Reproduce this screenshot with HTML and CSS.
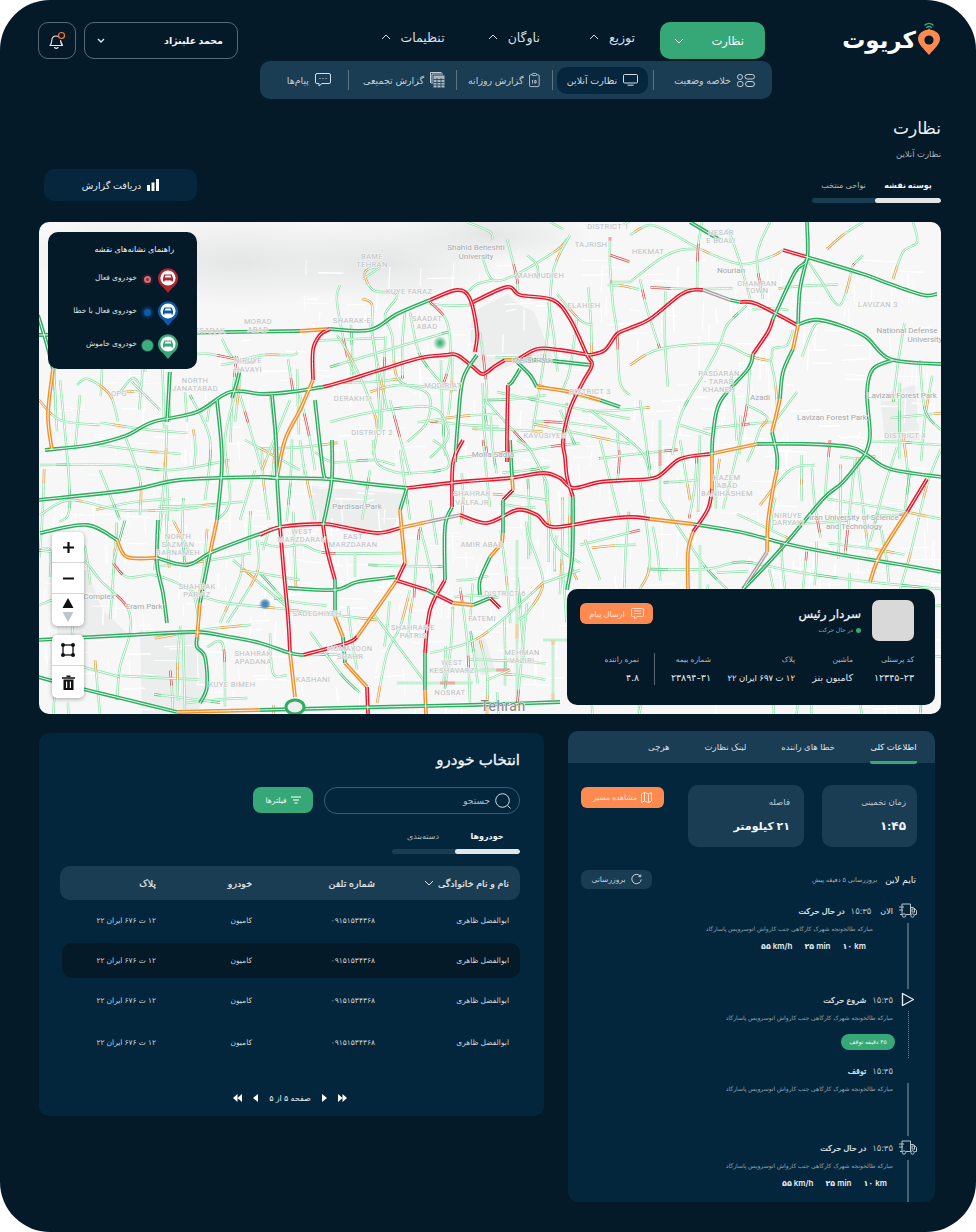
FILE: index.html
```html
<!DOCTYPE html>
<html lang="fa" dir="rtl">
<head>
<meta charset="utf-8">
<title>کریوت - نظارت</title>
<link rel="stylesheet" href="styles.css">
</head>
<body>
<div class="frame">
  <header class="topbar">
    <div class="logo">
      <svg class="logo-pin" width="24" height="36" viewBox="0 0 24 36">
        <path d="M8 5a6 6 0 0 1 8 0M9.7 7.5a3.5 3.5 0 0 1 4.6 0" fill="none" stroke="#36a877" stroke-width="1.4" stroke-linecap="round"/>
        <circle cx="12" cy="9.6" r="1" fill="#36a877"/>
        <path d="M12 35C7 29 1 24 1 19a11 9.500 0 0 1 22 0c0 5-6 10-11 16z" fill="#ff8a50"/>
        <circle cx="12" cy="20" r="4.600" fill="#051a28"/>
      </svg>
      <span class="logo-text">کریوت</span>
    </div>
    <nav class="nav">
      <a class="nav-active"><span>نظارت</span>
        <svg width="10" height="6" viewBox="0 0 10 6"><path d="M1 1l4 4 4-4" fill="none" stroke="#fff" stroke-width="1"/></svg></a>
      <a class="nav-item nav-a"><span>توزیع</span><svg width="10" height="6" viewBox="0 0 10 6"><path d="M1 5l4-4 4 4" fill="none" stroke="#d8dfe3" stroke-width="1"/></svg></a>
      <a class="nav-item nav-b"><span>ناوگان</span><svg width="10" height="6" viewBox="0 0 10 6"><path d="M1 5l4-4 4 4" fill="none" stroke="#d8dfe3" stroke-width="1"/></svg></a>
      <a class="nav-item nav-c"><span>تنظیمات</span><svg width="10" height="6" viewBox="0 0 10 6"><path d="M1 5l4-4 4 4" fill="none" stroke="#d8dfe3" stroke-width="1"/></svg></a>
    </nav>
    <div class="actions">
      <div class="user"><b>محمد علینژاد</b>
        <svg width="8" height="5" viewBox="0 0 8 5"><path d="M1 1l3 3 3-3" fill="none" stroke="#e8edf0" stroke-width="1.300"/></svg></div>
      <div class="bell">
        <svg width="20" height="20" viewBox="0 0 20 20">
          <path d="M3 14.500c1.500-1 1.600-2.500 1.800-5C5 6.500 7 5 9 5c1 0 1.700.2 2.300.6M13.500 9.500c.2 2.300.6 4 2 5zM3 14.500h12.500M7.500 16.500c1 1 2.500 1 3.500 0" fill="none" stroke="#e6ebee" stroke-width="1.100" stroke-linejoin="round" stroke-linecap="round"/>
          <circle cx="14.500" cy="4.500" r="3" fill="#051a28" stroke="#ff7a3c" stroke-width="1.200"/>
        </svg>
      </div>
    </div>
  </header>

  <div class="subnav">
    <a class="sub-item si-1">
      <svg width="18" height="13" viewBox="0 0 18 13" fill="none" stroke="#c3ced5" stroke-width="1"><rect x="8" y=".5" width="9.500" height="4.500" rx="2.250"/><rect x="8.500" y="7.500" width="9" height="5" rx="2.500" /><circle cx="3" cy="3" r="2.500"/><rect x=".5" y="7.500" width="5.500" height="5" rx="2"/></svg>
      <span>خلاصه وضعیت</span>
    </a>
    <i class="sub-div sd-1"></i>
    <a class="sub-item sub-active">
      <svg width="15" height="12" viewBox="0 0 15 12" fill="none" stroke="#d5dde2" stroke-width="1"><rect x=".5" y=".5" width="14" height="8.500" rx="1"/><path d="M4.500 11.200h6"/></svg>
      <span>نظارت آنلاین</span>
    </a>
    <i class="sub-div sd-2"></i>
    <a class="sub-item si-3">
      <svg width="12" height="16" viewBox="0 0 12 16" fill="none" stroke="#c3ced5" stroke-width="1"><rect x=".5" y="2" width="11" height="13.500" rx="1.500"/><rect x="3.500" y=".5" width="5" height="2.500" rx="1" fill="#1b3d54"/><path d="M4 8v4M6.500 8.500h1.500v3h-1.500z"/></svg>
      <span>گزارش روزانه</span>
    </a>
    <i class="sub-div sd-3"></i>
    <a class="sub-item si-4">
      <svg width="15" height="16" viewBox="0 0 15 16" fill="none" stroke="#c3ced5"><path d="M.5 11V.5h11" stroke-width="1"/><path d="M2 12V2h11" stroke-width="1"/><rect x="3.500" y="3.500" width="11" height="12" fill="#aab7bf" stroke="none"/><path d="M3.500 7.500h11M3.500 10.500h11M3.500 13h11M7 6v10M11 6v10" stroke="#1b3d54" stroke-width=".8"/></svg>
      <span>گزارش تجمیعی</span>
    </a>
    <i class="sub-div sd-4"></i>
    <a class="sub-item si-5">
      <svg width="16" height="14" viewBox="0 0 16 14" fill="none" stroke="#d5dde2" stroke-width="1"><path d="M2 .5h12a1.500 1.500 0 0 1 1.500 1.500v7a1.500 1.500 0 0 1-1.500 1.500H7L4 13v-2.500H2A1.500 1.500 0 0 1 .5 9V2A1.500 1.500 0 0 1 2 .5z"/><path d="M4.500 5.500h1M7.500 5.500h1M10.500 5.500h1" stroke-width="1.200"/></svg>
      <span>پیام‌ها</span>
    </a>
  </div>

  <div class="page-head">
    <h1>نظارت</h1>
    <p>نظارت آنلاین</p>
  </div>

  <div class="page-tools">
    <div class="seg seg-page">
      <div class="seg-labels"><b>پوسته نقشه</b><span>نواحی منتخب</span></div>
      <div class="seg-bar"><i></i></div>
    </div>
    <button class="report-btn">
      <svg width="12" height="12" viewBox="0 0 12 12" fill="#fff"><rect x="0" y="6" width="3" height="6"/><rect x="4.500" y="3.500" width="3" height="8.500"/><rect x="9" y="0" width="3" height="12"/></svg>
      <span>دریافت گزارش</span>
    </button>
  </div>

  <section class="map">
    <svg class="map-svg" viewBox="39 222 902 492" preserveAspectRatio="none">
      <defs>
        <radialGradient id="hill" cx="50%" cy="50%" r="50%"><stop offset="0" stop-color="#e4e5e5"/><stop offset="1" stop-color="#e4e5e5" stop-opacity="0"/></radialGradient>
        <radialGradient id="gdot" cx="50%" cy="50%" r="50%"><stop offset="0" stop-color="#2fae6a"/><stop offset=".4" stop-color="#2fae6a" stop-opacity=".7"/><stop offset="1" stop-color="#2fae6a" stop-opacity="0"/></radialGradient>
        <radialGradient id="bdot" cx="50%" cy="50%" r="50%"><stop offset="0" stop-color="#2f7fb5"/><stop offset=".5" stop-color="#2f7fb5" stop-opacity=".8"/><stop offset="1" stop-color="#2f7fb5" stop-opacity="0"/></radialGradient>
      </defs>
      <rect x="39" y="222" width="902" height="492" fill="#f7f7f7"/>
      <ellipse cx="240" cy="262" rx="130" ry="45" fill="url(#hill)"/>
      <ellipse cx="380" cy="262" rx="120" ry="42" fill="url(#hill)"/>
      <ellipse cx="490" cy="235" rx="100" ry="28" fill="url(#hill)"/>
      <ellipse cx="120" cy="255" rx="90" ry="36" fill="url(#hill)"/>
      <g fill="#eceeee">
        <path d="M310 486l95 8-12 36-40-1-43-7z"/>
        <path d="M472 312l36-18 10 10 16 8 20 50-40 2-20 8-20-6-4-30z"/>
        <path d="M140 630h58l10 70-16 14h-50z"/>
        <path d="M52 556l30 3 20 50 26 25-70 4z"/>
        <path d="M470 644l15-6 10 32-14 6z"/>
        <path d="M880 395l35-10 5 55-35 2z"/>
      </g>
      <g id="streets"></g>
      <g id="roads"></g>
      <g class="map-labels">
        <text x="372" y="259">BAME</text><text x="372" y="267">TEHRAN</text>
        <text x="476" y="250" class="lbl-strong">Shahid Beheshti</text><text x="476" y="259" class="lbl-strong">University</text>
        <text x="540" y="278">MAHMUDIEH</text><text x="584" y="308">ELAHIEH</text>
        <text x="608" y="229">DISTRICT 1</text><text x="591" y="247">TAJRISH</text>
        <text x="409" y="294">KUYE FARAZ</text><text x="427" y="321">SAADAT</text><text x="427" y="329">ABAD</text>
        <text x="352" y="323">SHARAK-E</text><text x="353" y="401">DERAKHTI</text><text x="443" y="388">MODIRIAT</text>
        <text x="372" y="435">DISTRICT 2</text><text x="590" y="394">DISTRICT 3</text>
        <text x="532" y="363" class="lbl-strong">Mellat Park</text><text x="545" y="438">KAVUSIYEH</text><text x="493" y="457" class="lbl-strong">Molla Sadra</text>
        <text x="721" y="235">HESAR</text><text x="721" y="243">E BUALI</text><text x="648" y="254">HEKMAT</text>
        <text x="731" y="273" class="lbl-strong">Nourian</text><text x="757" y="286">CHAMRAN</text><text x="757" y="293">TOWN</text>
        <text x="878" y="307">LAVIZAN 3</text><text x="907" y="333" class="lbl-strong">National Defense</text><text x="925" y="342" class="lbl-strong">University</text>
        <text x="902" y="398" class="lbl-strong">Lavizan Forest Park</text><text x="832" y="420" class="lbl-strong">Lavizan Forest Park</text>
        <text x="905" y="438">DISTRICT 4</text><text x="760" y="400" class="lbl-strong">Azadi</text>
        <text x="719" y="376">PASDARAN</text><text x="719" y="384">- TARAB</text><text x="719" y="392">KHANEH</text>
        <text x="727" y="480">KAZEM</text><text x="727" y="488">ABAD</text><text x="727" y="496">BANIHASHEM</text>
        <text x="788" y="518">NIRUYE</text><text x="788" y="525">DARYAYI</text>
        <text x="854" y="520" class="lbl-strong">Iran University of Science</text><text x="854" y="529" class="lbl-strong">and Technology</text>
        <text x="357" y="509" class="lbl-strong">Pardisan Park</text><text x="302" y="534">WEST</text><text x="302" y="542">MARZDARAN</text>
        <text x="353" y="539">EAST</text><text x="353" y="547">MARZDARAN</text>
        <text x="472" y="496">SHAHRAK</text><text x="472" y="505">VALFAJR</text><text x="482" y="547">AMIR ABAD</text>
        <text x="505" y="596">DISTRICT 6</text><text x="482" y="621">FATEMI</text>
        <text x="413" y="630">SHAHRAK-E</text><text x="413" y="638">PATRIS</text><text x="350" y="651">HOMAYOON</text><text x="350" y="659">SHAHR</text>
        <text x="452" y="665">WEST</text><text x="452" y="673">KESHAVARZ</text><text x="450" y="695">NOSRAT</text>
        <text x="522" y="655">MEHMAN</text><text x="522" y="663">VAZIRI</text><text x="317" y="616">SADEGHIYEH</text><text x="313" y="682">KASHANI</text>
        <text x="178" y="539">NORTH</text><text x="178" y="547">SAZMAN</text><text x="178" y="555">BARNAMEH</text>
        <text x="197" y="589">SHAHRAK</text><text x="197" y="597">PARVIZ</text><text x="99" y="599" class="lbl-strong">Complex</text><text x="144" y="609" class="lbl-strong">Eram Park</text>
        <text x="253" y="656">SHAHRAK</text><text x="253" y="664">APADANA</text><text x="232" y="687">KUYE BIMEH</text>
        <text x="258" y="324">MORAD</text><text x="258" y="332">ABAD</text><text x="119" y="396">OPG</text>
        <text x="195" y="383">NORTH</text><text x="195" y="391">JANATABAD</text><text x="248" y="363">NIRUYE</text><text x="248" y="372">HAVAYI</text><text x="210" y="333">ESARAK</text>
        <text x="503" y="711" class="lbl-city">Tehran</text>
      </g>
      <circle cx="440" cy="343" r="7" fill="url(#gdot)"/>
      <circle cx="265" cy="604" r="6" fill="url(#bdot)"/>
    </svg>

    <aside class="legend">
      <h3>راهنمای نشانه‌های نقشه</h3>
      <div class="legend-row">
        <svg width="20" height="25" viewBox="0 0 20 25"><path d="M10 25l-5-6a10 10 0 1 1 10 0z" fill="#b2252e"/><circle cx="10" cy="10" r="7.600" fill="#fff"/><path d="M5 13.500V10l1.300-3.400h7.400L15 10v3.500h-1.500V12.500h-7v1zM6.700 9.500h6.600l-.8-2H7.500z" fill="#b2252e" fill-rule="evenodd"/></svg>
        <i class="ldot ldot-r"></i><span>خودروی فعال</span>
      </div>
      <div class="legend-row">
        <svg width="20" height="25" viewBox="0 0 20 25"><path d="M10 25l-5-6a10 10 0 1 1 10 0z" fill="#0c5aa8"/><circle cx="10" cy="10" r="7.600" fill="#fff"/><path d="M5 13.500V10l1.300-3.400h7.400L15 10v3.500h-1.500V12.500h-7v1zM6.700 9.500h6.600l-.8-2H7.500z" fill="#0c5aa8" fill-rule="evenodd"/></svg>
        <i class="ldot ldot-b"></i><span>خودروی فعال با خطا</span>
      </div>
      <div class="legend-row">
        <svg width="20" height="25" viewBox="0 0 20 25"><path d="M10 25l-5-6a10 10 0 1 1 10 0z" fill="#36a877"/><circle cx="10" cy="10" r="7.600" fill="#fff"/><path d="M5 13.500V10l1.300-3.400h7.400L15 10v3.500h-1.500V12.500h-7v1zM6.700 9.500h6.600l-.8-2H7.500z" fill="#36a877" fill-rule="evenodd"/></svg>
        <i class="ldot ldot-g"></i><span>خودروی خاموش</span>
      </div>
    </aside>

    <div class="map-tools">
      <div class="tool-group">
        <button class="tool"><svg width="13" height="13" viewBox="0 0 13 13"><path d="M6.500 1v11M1 6.500h11" stroke="#111" stroke-width="2.200"/></svg></button>
        <button class="tool"><svg width="13" height="13" viewBox="0 0 13 13"><path d="M1 6.500h11" stroke="#111" stroke-width="2.200"/></svg></button>
        <button class="tool tool-last"><svg width="12" height="26" viewBox="0 0 12 26"><path d="M6 1l5.500 10H.5z" fill="#111"/><path d="M6 25l-5.500-10h11z" fill="#bcc7cc"/></svg></button>
      </div>
      <div class="tool-group">
        <button class="tool"><svg width="14" height="14" viewBox="0 0 14 14"><rect x="2" y="2" width="10" height="10" fill="none" stroke="#111" stroke-width="1.300"/><circle cx="2" cy="2" r="2" fill="#111"/><circle cx="12" cy="2" r="2" fill="#111"/><circle cx="2" cy="12" r="2" fill="#111"/><circle cx="12" cy="12" r="2" fill="#111"/></svg></button>
        <button class="tool tool-last"><svg width="13" height="15" viewBox="0 0 13 15"><path d="M0 2.300h13v1.500H0zM4.500 .5h4v1.500h-4zM1.500 4.500h10V15h-10zM4 6.500v6.500h1.200V6.500zM7.800 6.500v6.500H9V6.500z" fill="#111" fill-rule="evenodd"/></svg></button>
      </div>
    </div>

    <article class="driver">
      <div class="driver-top">
        <div class="avatar"></div>
        <div class="driver-name">
          <strong>سردار رئیس</strong>
          <span><i></i>در حال حرکت</span>
        </div>
        <button class="orange-btn msg-btn">
          <svg width="13" height="12" viewBox="0 0 13 12" fill="none" stroke="#ffd9c4" stroke-width="1"><path d="M1.500.5h10a1 1 0 0 1 1 1v6a1 1 0 0 1-1 1H6L3.500 11V8.500h-2a1 1 0 0 1-1-1v-6a1 1 0 0 1 1-1zM3 3h7M3 5.500h7"/></svg>
          <span>ارسال پیام</span>
        </button>
      </div>
      <div class="driver-stats">
        <div><label>کد پرسنلی</label><b>۱۲۳۴۵-۲۳</b></div>
        <div><label>ماشین</label><b>کامیون بنز</b></div>
        <div><label>پلاک</label><b class="plate">۱۲ ت ۶۹۷ ایران ۲۲</b></div>
        <div><label>شماره بیمه</label><b>۲۳۸۹۴-۳۱</b></div>
        <div class="stat-last"><label>نمره راننده</label><b>۴.۸</b></div>
      </div>
    </article>
  </section>

  <div class="columns">
    <section class="detail">
      <div class="detail-tabs">
        <a class="dt-active">اطلاعات کلی</a>
        <a>خطا های راننده</a>
        <a>لینک نظارت</a>
        <a>هرچی</a>
      </div>
      <div class="summary">
        <div class="stat-card card-a"><span>زمان تخمینی</span><b>۱:۴۵</b></div>
        <div class="stat-card card-b"><span>فاصله</span><b>۲۱ کیلومتر</b></div>
        <button class="orange-btn route-btn">
          <svg width="11" height="11" viewBox="0 0 11 11" fill="none" stroke="#ffe3d4" stroke-width="1"><path d="M.5 2l3-1.500 4 1.500 3-1.500v8.500l-3 1.500-4-1.500-3 1.500zM3.500.5v8.500M7.500 2v8.500"/></svg>
          <span>مشاهده مسیر</span>
        </button>
      </div>
      <div class="tl-head">
        <b>تایم لاین</b>
        <span>بروزرسانی ۵ دقیقه پیش</span>
        <button class="refresh">
          <svg width="11" height="11" viewBox="0 0 11 11" fill="none" stroke="#c5d0d6" stroke-width="1"><path d="M9.500 2.500A4.700 4.700 0 1 0 10.200 5.500"/><path d="M7.500 2.700h2.300V.5"/></svg>
          <span>بروزرسانی</span>
        </button>
      </div>
      <div class="timeline">
        <div class="tl-item tl-1">
          <div class="tl-rail">
            <svg class="truck" width="18" height="16" viewBox="0 0 18 16" fill="none" stroke="#b9c6cd" stroke-width="1"><path d="M3 11.500V1h8.500v10.500M11.500 4.500h3l3 3v4h-2M3 11.500H1M11.500 11.500H7"/><circle cx="5" cy="12.500" r="1.700"/><circle cx="13.500" cy="12.500" r="1.700"/><path d="M0 4h5M0 7h4"/><rect x="13" y="6" width="2.500" height="3"/></svg>
            <i class="rail-line"></i>
          </div>
          <div class="tl-body">
            <div class="tl-title"><em>الان</em><time>۱۵:۳۵</time><b>در حال حرکت</b></div>
            <p>مبارکه طالخونچه شهرک کارگاهی جنب کارواش اتوسرویس پاسارگاد</p>
            <div class="metrics"><span dir="ltr">۱۰ km</span><span dir="ltr">۲۵ min</span><span dir="ltr">۵۵ km/h</span></div>
          </div>
        </div>
        <div class="tl-item tl-2">
          <div class="tl-rail">
            <svg width="14" height="15" viewBox="0 0 14 15" fill="none" stroke="#e4eaed" stroke-width="1.400"><path d="M1.500 1.500v12l11-6z" stroke-linejoin="round"/></svg>
            <i class="rail-line rail-dots"></i>
          </div>
          <div class="tl-body">
            <div class="tl-title"><time>۱۵:۳۵</time><b>شروع حرکت</b></div>
            <p>مبارکه طالخونچه شهرک کارگاهی جنب کارواش اتوسرویس پاسارگاد</p>
            <span class="badge">۴۵ دقیقه توقف</span>
          </div>
        </div>
        <div class="tl-item tl-3">
          <div class="tl-rail tl-rail-gap"><i class="rail-line"></i></div>
          <div class="tl-body">
            <div class="tl-title"><time>۱۵:۳۵</time><b>توقف</b></div>
            <p>مبارکه طالخونچه شهرک کارگاهی جنب کارواش اتوسرویس پاسارگاد</p>
          </div>
        </div>
        <div class="tl-item tl-4">
          <div class="tl-rail">
            <svg class="truck" width="18" height="16" viewBox="0 0 18 16" fill="none" stroke="#b9c6cd" stroke-width="1"><path d="M3 11.500V1h8.500v10.500M11.500 4.500h3l3 3v4h-2M3 11.500H1M11.500 11.500H7"/><circle cx="5" cy="12.500" r="1.700"/><circle cx="13.500" cy="12.500" r="1.700"/><path d="M0 4h5M0 7h4"/><rect x="13" y="6" width="2.500" height="3"/></svg>
            <i class="rail-line"></i>
          </div>
          <div class="tl-body">
            <div class="tl-title"><time>۱۵:۳۵</time><b>در حال حرکت</b></div>
            <p>مبارکه طالخونچه شهرک کارگاهی جنب کارواش اتوسرویس پاسارگاد</p>
            <div class="metrics"><span dir="ltr">۱۰ km</span><span dir="ltr">۲۵ min</span><span dir="ltr">۵۵ km/h</span></div>
          </div>
        </div>
      </div>
    </section>

    <section class="vehicles">
      <h2>انتخاب خودرو</h2>
      <div class="search-row">
        <div class="search">
          <svg width="16" height="16" viewBox="0 0 16 16" fill="none" stroke="#d5dde2" stroke-width="1"><circle cx="7.500" cy="7.500" r="6.800"/><path d="M12.500 12.500l3 3"/></svg>
          <span>جستجو</span>
        </div>
        <button class="filter">
          <svg width="10" height="8" viewBox="0 0 10 8" stroke="#fff" stroke-width="1.200"><path d="M0 1h10M2 4h6M3.500 7h3"/></svg>
          <span>فیلترها</span>
        </button>
      </div>
      <div class="seg seg-list">
        <div class="seg-labels"><b>خودروها</b><span>دسته‌بندی</span></div>
        <div class="seg-bar"><i></i></div>
      </div>
      <div class="v-head">
        <div class="v-sort"><span>نام و نام خانوادگی</span><svg width="10" height="6" viewBox="0 0 10 6"><path d="M1 1l4 4 4-4" fill="none" stroke="#dfe6ea" stroke-width="1"/></svg></div>
        <div>شماره تلفن</div><div>خودرو</div><div>پلاک</div>
      </div>
      <div class="v-rows">
        <div class="v-row"><div>ابوالفضل ظاهری</div><div>۰۹۱۵۱۵۳۴۳۶۸</div><div>کامیون</div><div>۱۲ ت ۶۷۶ ایران ۲۲</div></div>
        <div class="v-row v-row-on"><div>ابوالفضل ظاهری</div><div>۰۹۱۵۱۵۳۴۳۶۸</div><div>کامیون</div><div>۱۲ ت ۶۷۶ ایران ۲۲</div></div>
        <div class="v-row"><div>ابوالفضل ظاهری</div><div>۰۹۱۵۱۵۳۴۳۶۸</div><div>کامیون</div><div>۱۲ ت ۶۷۶ ایران ۲۲</div></div>
        <div class="v-row"><div>ابوالفضل ظاهری</div><div>۰۹۱۵۱۵۳۴۳۶۸</div><div>کامیون</div><div>۱۲ ت ۶۷۶ ایران ۲۲</div></div>
      </div>
      <div class="pager">
        <svg width="9" height="8" viewBox="0 0 9 8" fill="#fff"><path d="M0 0l4.500 4L0 8zM4.500 0L9 4 4.500 8z"/></svg>
        <svg width="5" height="8" viewBox="0 0 5 8" fill="#fff"><path d="M0 0l5 4-5 4z"/></svg>
        <span>صفحه ۵ از ۵</span>
        <svg width="5" height="8" viewBox="0 0 5 8" fill="#fff"><path d="M5 0L0 4l5 4z"/></svg>
        <svg width="9" height="8" viewBox="0 0 9 8" fill="#fff"><path d="M4.500 0L0 4l4.500 4zM9 0L4.500 4 9 8z"/></svg>
      </div>
    </section>
  </div>
</div>
<script src="map.js"></script>
</body>
</html>
```

FILE: styles.css
```css
* { box-sizing: border-box; }
html, body { margin: 0; padding: 0; background: #fff; }
body { width: 976px; height: 1232px; overflow: hidden; font-family: "Inter", "DejaVu Sans", sans-serif; color: #e6ebee; }
button { font: inherit; color: inherit; border: 0; padding: 0; background: none; }
h1, h2, h3, p { margin: 0; font-weight: normal; }
i, em { font-style: normal; }

.frame { width: 976px; height: 1232px; padding: 22px 35px 0 39px; background: #051a28; border-radius: 50px; overflow: hidden; }

/* top bar */
.topbar { display: flex; align-items: flex-start; height: 37px; }
.logo { width: 101px; height: 37px; display: flex; align-items: center; gap: 1px; }
.logo-pin { flex: none; margin-top: -5px; }
.logo-text { font-size: 23px; font-weight: bold; color: #fff; line-height: 37px; letter-spacing: -.5px; white-space: nowrap; }
.nav { display: flex; margin-right: 75px; }
.nav-active { width: 105px; height: 37px; display: flex; align-items: center; justify-content: space-between; padding: 0 21px 0 14px; background: #36a877; border-radius: 10px; color: #fff; font-size: 11.500px; }
.nav-item { display: flex; align-items: center; gap: 10px; height: 30px; font-size: 12.500px; color: #d8dfe3; white-space: nowrap; }
.nav-a { margin-right: 25px; }
.nav-b { margin-right: 49px; }
.nav-c { margin-right: 43px; }
.actions { display: flex; gap: 8px; margin-right: auto; margin-left: -1px; }
.user { width: 154px; height: 37px; display: flex; align-items: center; justify-content: space-between; padding: 0 14px 0 12px; border: 1px solid #5a6a74; border-radius: 10px; font-size: 9.500px; color: #f2f5f6; white-space: nowrap; }
.bell { width: 38px; height: 37px; display: flex; align-items: center; justify-content: center; border: 1px solid #5a6a74; border-radius: 10px; }

/* sub nav */
.subnav { width: 512px; height: 38px; margin: 2px 169px 0 0; display: flex; align-items: center; padding: 0 17px 0 0; background: #1b3d54; border-radius: 10px; }
.sub-item { display: flex; align-items: center; gap: 6px; font-size: 9.500px; color: #c3ced5; white-space: nowrap; height: 27px; flex: none; }
.si-1 { width: 84px; }
.si-3 { width: 72px; }
.si-4 { width: 84px; }
.si-5 { width: 49px; }
.sub-active { width: 91px; padding: 0 9px; background: #05263c; border-radius: 10px; color: #d5dde2; justify-content: center; }
.sub-div { width: 1px; height: 20px; background: #5c7484; flex: none; }
.sd-1 { margin: 0 17px 0 5px; }
.sd-2 { margin: 0 4px 0 12px; }
.sd-3 { margin: 0 11px 0 11px; }
.sd-4 { margin: 0 12px 0 17px; }

/* page head */
.page-head { margin-top: 17px; }
.page-head h1 { font-size: 17px; line-height: 24px; color: #eef2f4; }
.page-head p { margin-top: 7px; font-size: 8.500px; line-height: 14px; color: #a9b5bc; }
.page-tools { display: flex; justify-content: space-between; height: 34px; margin-top: 8px; }
.seg { width: 129px; padding-top: 9px; }
.seg-labels { display: grid; grid-template-columns: 66px 1fr; text-align: center; font-size: 8px; line-height: 14px; color: #aebbc2; white-space: nowrap; }
.seg-labels b { color: #f2f5f6; }
.seg-bar { height: 5px; margin-top: 6px; border-radius: 3px; background: #1b3d54; overflow: hidden; }
.seg-bar i { display: block; width: 51%; height: 5px; border-radius: 3px; background: #e3e6e8; }
.report-btn { width: 153px; height: 32px; margin-left: 5px; display: flex; align-items: center; justify-content: center; gap: 6px; background: #05263c; border-radius: 10px; font-size: 9.500px; color: #e6ebee; }

/* map */
.map { position: relative; height: 492px; margin-top: 19px; border-radius: 10px; overflow: hidden; }
.map-svg { display: block; width: 902px; height: 492px; }
.map-labels text { font-family: "Roboto", sans-serif; font-size: 7.500px; letter-spacing: .4px; fill: #bcc0c3; text-anchor: middle; direction: ltr; paint-order: stroke; stroke: #f7f7f7; stroke-width: 1.200px; }
.map-labels .lbl-strong { fill: #a4a9ac; letter-spacing: 0; font-size: 8px; }
.map-labels .lbl-city { font-size: 14px; fill: #80858a; }

.legend { position: absolute; left: 9px; top: 10px; width: 149px; height: 137px; padding: 11px 10px 0 8px; background: #051a28; border-radius: 10px; }
.legend h3 { font-size: 8px; line-height: 12px; color: #eef2f4; white-space: nowrap; padding-right: 13px; }
.legend-row { display: flex; align-items: flex-start; height: 33px; gap: 6px; padding-right: 9px; font-size: 7.500px; color: #dfe5e9; white-space: nowrap; }
.legend h3 + .legend-row { margin-top: 13px; }
.legend-row span { line-height: 20px; }
.ldot { width: 9px; height: 9px; margin-top: 7px; border-radius: 50%; flex: none; }
.ldot-r { background: #b2252e; border: 2px solid #c9737a; width: 7px; height: 7px; margin: 8px 1px 0 1px; box-shadow: 0 0 0 2px rgba(178,37,46,.25); }
.ldot-b { background: #0c5aa8; width: 7px; height: 7px; margin: 8px 1px 0 1px; box-shadow: 0 0 3px 2px rgba(12,90,168,.5); }
.ldot-g { background: #3fae7d; width: 11px; height: 11px; margin: 6px -1px 0 -1px; box-shadow: 0 0 0 1px rgba(63,174,125,.4); }

.map-tools { position: absolute; left: 13px; top: 310px; display: flex; flex-direction: column; gap: 9px; }
.tool-group { width: 32px; background: #fff; border-radius: 5px; box-shadow: 0 1px 4px rgba(0,0,0,.35); }
.tool { width: 32px; height: 31px; display: flex; align-items: center; justify-content: center; border-bottom: 1px solid #d4d8da; }
.tool-last { height: auto; min-height: 32px; padding: 3px 0; border-bottom: 0; }

.driver { position: absolute; left: 528px; top: 367px; width: 368px; height: 116px; padding: 11px 21px 0 13px; background: #051a28; border-radius: 10px; }
.driver-top { display: flex; align-items: flex-start; height: 41px; }
.avatar { width: 42px; height: 41px; background: #d9d9d9; border-radius: 7px; flex: none; }
.driver-name { margin-right: 11px; }
.driver-name strong { display: block; font-size: 12px; line-height: 18px; font-weight: normal; color: #f2f5f6; margin-top: 5px; -webkit-text-stroke: .25px #f2f5f6; }
.driver-name span { display: flex; align-items: center; gap: 3px; font-size: 6px; line-height: 14px; color: #97a5ad; }
.driver-name span i { width: 5px; height: 5px; border-radius: 50%; background: #36a877; }
.orange-btn { display: flex; align-items: center; justify-content: center; gap: 6px; background: #ff8a50; border-radius: 6px; color: #ffe3d4; font-size: 8px; white-space: nowrap; }
.msg-btn { width: 73px; height: 21px; margin: 3px auto 0 0; }
.driver-stats { display: grid; grid-template-columns: 61px 58px 84px 56px 1fr; margin-top: 12px; white-space: nowrap; }
.driver-stats label { display: block; font-size: 7.500px; line-height: 14px; color: #a9b5bc; }
.driver-stats b { display: block; margin-top: 4px; font-size: 9.500px; line-height: 14px; font-weight: normal; color: #e6ebee; }
.driver-stats .plate { font-size: 8.500px; }
.stat-last { border-right: 1px solid #5c6b75; padding-right: 15px; }

/* columns */
.columns { display: flex; align-items: flex-start; margin-top: 17px; padding-right: 6px; gap: 24px; }

/* detail */
.detail { width: 367px; height: 471px; flex: none; background: #03263c; border-radius: 10px; overflow: hidden; }
.detail-tabs { display: flex; gap: 35px; height: 32px; padding: 0 18px; background: #1b3d54; font-size: 8.500px; color: #d5dde2; white-space: nowrap; }
.detail-tabs a { height: 33px; line-height: 33px; position: relative; }
.dt-active { width: 47px; text-align: center; border-bottom: 3px solid #36a877; border-radius: 0 0 2px 2px; color: #eef2f4; }
.summary { display: flex; align-items: flex-start; padding: 22px 18px 0 13px; }
.stat-card { height: 62px; padding: 10px 14px 0 0; background: #1b3d54; border-radius: 10px; }
.stat-card span { display: block; font-size: 8.500px; line-height: 14px; color: #bcc8cf; }
.stat-card b { display: block; margin-top: 8px; font-size: 11px; line-height: 18px; color: #f2f5f6; white-space: nowrap; }
.card-a { width: 95px; padding-right: 11px; }
.card-a b { font-size: 12px; }
.card-b { width: 116px; margin-right: 18px; }
.route-btn { width: 83px; height: 21px; margin: 2px auto 0 0; gap: 4px; font-size: 7.500px; }
.tl-head { display: flex; align-items: center; gap: 8px; height: 19px; margin-top: 23px; padding: 0 19px 0 13px; font-size: 9px; }
.tl-head b { font-weight: normal; color: #eef2f4; white-space: nowrap; }
.tl-head span { font-size: 6.500px; color: #9fadb5; white-space: nowrap; }
.refresh { width: 71px; height: 19px; margin-right: auto; display: flex; align-items: center; justify-content: center; gap: 5px; background: #1b3d54; border-radius: 7px; }
.tl-head .refresh span { font-size: 7.500px; color: #c5d0d6; }
.timeline { margin-top: 14px; padding-right: 17px; }
.tl-item { display: flex; gap: 5px; }
.tl-1 { height: 89px; }
.tl-2 { height: 71px; }
.tl-3 { height: 77px; }
.tl-4 { height: 70px; }
.tl-rail { width: 20px; display: flex; flex-direction: column; align-items: center; flex: none; }
.tl-rail svg { flex: none; }
.tl-rail-gap { padding-top: 14px; }
.rail-line { flex: 1; width: 2px; margin: 4px 0 1px; background: #46616f; }
.tl-1 .rail-line { margin-bottom: 3px; }
.tl-2 .rail-line { margin-bottom: 5px; }
.tl-3 .rail-line { margin: 6px 0 4px; }
.rail-line.rail-dots { width: 1px; background: none; border-right: 1px dotted #6b8492; }
.tl-title { display: flex; gap: 6px; height: 16px; align-items: center; font-size: 8px; color: #e6ebee; white-space: nowrap; }
.tl-title b { font-weight: normal; -webkit-text-stroke: .2px #e6ebee; }
.tl-title em { margin-left: 3px; }
.tl-title time { color: #b3c0c7; font-size: 8.500px; }
.tl-body p { margin-top: 3px; font-size: 6px; line-height: 14px; color: #91a1aa; white-space: nowrap; }
.tl-1 .tl-body p { padding-right: 20px; }
.metrics { display: flex; gap: 12px; margin-top: 4px; padding-right: 27px; font-size: 8px; line-height: 12px; color: #e6ebee; font-weight: 600; white-space: nowrap; }
.tl-4 .metrics { padding-right: 6px; }
.badge { display: block; width: 54px; height: 16px; margin-top: 9px; margin-right: -2px; background: #36a877; border-radius: 8px; text-align: center; font-size: 6px; line-height: 16px; color: #eaf7f1; white-space: nowrap; }

/* vehicles */
.vehicles { width: 505px; height: 383px; margin-top: 2px; padding: 15px 24px 0 21px; background: #03263c; border-radius: 10px; flex: none; }
.vehicles h2 { font-size: 15px; line-height: 24px; color: #f2f5f6; -webkit-text-stroke: .3px #f2f5f6; }
.search-row { display: flex; align-items: flex-start; gap: 11px; margin-top: 15px; }
.search { width: 196px; height: 27px; display: flex; align-items: center; gap: 5px; padding: 0 8px; border: 1px solid #3c5a6c; border-radius: 13px; font-size: 9px; color: #aebbc2; }
.filter { width: 60px; height: 26px; display: flex; align-items: center; justify-content: center; gap: 4px; background: #36a877; border-radius: 8px; font-size: 7.500px; color: #f0faf5; }
.seg-list { width: 128px; margin-top: 15px; padding-top: 0; }
.seg-list .seg-bar { margin-top: 6px; }
.v-head { display: grid; grid-template-columns: 134px 123px 96px 1fr; align-items: center; height: 34px; margin-top: 12px; padding: 0 11px; background: #1b3d54; border-radius: 10px; font-size: 9.500px; color: #e6ebee; white-space: nowrap; -webkit-text-stroke: .2px #e6ebee; }
.v-sort { display: flex; align-items: center; gap: 4px; }
.v-rows { display: flex; flex-direction: column; gap: 5px; padding-top: 3px; }
.v-row { display: grid; grid-template-columns: 134px 123px 96px 1fr; align-items: center; height: 35px; margin-left: 2px; padding: 0 11px; border-radius: 10px; font-size: 7.500px; color: #cdd6db; white-space: nowrap; }
.v-row:last-child { margin-top: 2px; }
.v-row-on { background: #051a28; }
.pager { display: flex; justify-content: center; align-items: center; gap: 11px; margin-top: 31px; font-size: 8px; color: #e6ebee; height: 14px; }
```

FILE: map.js
```js
// Draws the traffic layer of the map from road data (page coordinates).
(function () {
  var NS = 'http://www.w3.org/2000/svg';
  var C = { g: '#2fae62', r: '#e8172b', o: '#f2902a', x: '#a9a3a6', d: '#b52a3c' };
  var seed = 7;
  function rnd() { seed = (seed * 16807) % 2147483647; return seed / 2147483647; }

  function smooth(p) {
    var d = 'M' + p[0][0] + ' ' + p[0][1];
    for (var i = 0; i < p.length - 1; i++) {
      var a = p[i - 1] || p[i], b = p[i], c = p[i + 1], e = p[i + 2] || c;
      var c1x = b[0] + (c[0] - a[0]) / 6, c1y = b[1] + (c[1] - a[1]) / 6;
      var c2x = c[0] - (e[0] - b[0]) / 6, c2y = c[1] - (e[1] - b[1]) / 6;
      d += 'C' + c1x.toFixed(1) + ' ' + c1y.toFixed(1) + ' ' + c2x.toFixed(1) + ' ' + c2y.toFixed(1) + ' ' + c[0] + ' ' + c[1];
    }
    return d;
  }
  function line(g, d, color, w, dash, off) {
    var el = document.createElementNS(NS, 'path');
    el.setAttribute('d', d);
    el.setAttribute('fill', 'none');
    el.setAttribute('stroke', color);
    el.setAttribute('stroke-width', w);
    el.setAttribute('stroke-linejoin', 'round');
    if (dash) { el.setAttribute('stroke-dasharray', dash); el.setAttribute('stroke-dashoffset', off || 0); }
    g.appendChild(el);
  }

  var MINOR = [
    [[222,339],[235,359],[263,355],[293,355],[297,352]],[[288,359],[293,392]],[[197,354],[210,354],[235,359]],[[168,372],[170,422]],
    [[233,395],[240,375],[235,422]],[[185,392],[187,422]],[[207,422],[210,402]],[[77,385],[88,379],[110,395],[118,422]],
    [[340,285],[337,302],[347,355],[355,375]],[[363,279],[380,267],[365,272],[373,290],[397,295],[385,315],[392,335],[398,379],[428,394],[427,422],[407,442]],
    [[362,299],[372,305],[373,339],[387,409]],[[410,312],[420,355],[443,385]],[[430,302],[447,322],[450,359],[443,385]],[[330,367],[448,332]],
    [[370,392],[400,385],[457,390]],[[330,422],[373,412],[430,407],[447,425],[447,440],[430,458]],[[337,335],[353,362],[373,409],[377,429],[373,455]],
    [[467,222],[490,232],[492,240]],[[507,239],[517,279],[517,292]],[[483,259],[493,280],[517,274],[557,250],[567,239]],[[468,292],[477,284],[493,280]],
    [[550,222],[563,229]],[[527,255],[537,265],[538,279]],[[570,235],[553,272],[547,339],[533,429]],[[610,237],[610,265],[613,305],[617,332],[620,382],[630,395]],
    [[557,294],[580,320],[593,325]],[[610,255],[630,262]],[[610,282],[630,282]],[[577,319],[570,369],[563,389]],[[537,385],[603,402],[620,407]],
    [[497,392],[530,399],[630,419]],[[533,424],[630,444]],[[480,332],[487,392],[483,415],[487,455]],[[487,402],[530,449]],[[370,322],[377,369],[380,429]],
    [[630,235],[650,225],[673,234],[700,249],[740,264],[770,257],[783,250]],[[630,282],[660,259],[680,250],[700,249]],[[702,222],[698,249],[697,289]],
    [[728,229],[740,262],[750,299]],[[770,222],[757,255],[763,299]],[[640,279],[647,309],[660,349]],[[630,365],[660,349],[720,344],[747,355],[770,360],[773,349],[787,345],[793,330]],
    [[747,305],[727,325],[720,344],[707,369],[682,412],[672,455]],[[700,435],[698,512]],[[680,425],[712,435]],[[750,362],[747,405],[738,449],[723,509]],
    [[747,405],[767,417],[760,429],[753,449],[747,462]],[[830,322],[815,325],[802,357]],[[807,259],[820,279],[840,305],[853,265]],[[827,249],[843,235],[863,222]],
    [[853,265],[863,255]],[[893,279],[903,252],[917,242],[913,222]],[[797,392],[777,419]],[[870,442],[897,442],[941,445]],[[897,447],[883,492],[870,542]],
    [[941,449],[927,485],[910,555],[900,589]],[[827,499],[885,508],[941,519]],[[737,514],[790,539]],[[807,549],[803,589]],[[690,545],[707,569],[727,589]],
    [[647,569],[707,569],[743,562],[797,572],[870,582],[941,589]],[[867,392],[873,369],[893,360]],[[623,225],[640,215]],
    [[315,452],[333,462],[373,460],[395,465]],[[373,440],[377,463],[395,472],[413,473],[447,468],[445,450],[433,440]],[[457,458],[527,450],[547,447],[580,443]],
    [[517,440],[530,450],[547,483]],[[483,440],[490,507]],[[547,483],[553,540],[580,563]],[[527,527],[530,540],[543,583],[527,613],[517,620]],[[570,493],[570,557],[577,580]],
    [[543,583],[580,570]],[[260,543],[280,547],[303,545],[327,553],[403,553]],[[355,553],[355,577]],[[260,573],[287,603]],[[420,527],[430,567],[433,590]],
    [[410,590],[400,627],[387,653],[377,703]],[[373,613],[425,682]],[[290,610],[377,620]],[[310,632],[340,673],[360,693]],[[430,653],[480,637],[543,583]],
    [[397,683],[473,683]],[[460,587],[467,640],[470,703]],[[517,540],[517,600],[517,707]],[[543,640],[580,640]],[[480,640],[487,673],[487,714]],[[433,670],[510,670]],
    [[487,680],[510,670]],[[553,640],[553,700]],[[527,603],[517,707]],[[400,450],[410,520]],[[300,440],[305,475]],[[345,440],[352,480]],[[430,500],[437,545]],
    [[38,550],[50,550],[50,577]],[[38,550],[80,558],[100,580],[127,607],[130,633],[120,667],[117,700]],[[113,563],[127,577],[153,575],[177,583],[203,598]],
    [[233,560],[287,607]],[[125,520],[113,563]],[[173,520],[190,553]],[[243,553],[240,577],[220,623]],[[257,540],[257,573],[227,623]],[[203,597],[227,603],[285,609]],
    [[83,667],[120,677]],[[183,633],[185,713]],[[207,647],[223,645],[225,707]],[[270,633],[273,673],[287,675]],[[263,550],[270,527]],
    [[40,465],[120,465],[170,470],[230,460]],[[60,380],[70,500],[60,522]],[[167,425],[165,470],[160,520]],[[100,470],[120,520]],[[235,395],[225,440],[230,500],[217,520]],
    [[40,515],[70,500],[120,510],[170,510],[217,505]],[[270,395],[275,440],[272,480]],[[300,395],[310,440],[315,470]],[[245,440],[300,470]],[[80,395],[75,450]],
    [[39,400],[60,420],[100,425]],[[125,436],[140,480],[140,515]],[[255,470],[240,520]],[[190,395],[210,440],[205,500]],[[39,605],[52,600]],[[95,660],[100,714]],
    [[120,392],[133,378],[140,390],[120,392]],[[132,382],[160,410]],[[240,395],[262,470]],[[290,400],[262,470]],[[305,470],[315,520]],[[240,570],[300,580]],
    [[370,470],[362,520]],[[390,400],[410,475]],[[590,410],[640,450],[650,478]],[[600,440],[620,520]],[[640,480],[650,560],[640,589]],[[660,500],[690,545]],
    [[700,545],[700,589]],[[760,505],[790,470],[815,465]],[[830,440],[825,495]],[[855,460],[845,555]],[[910,470],[905,510]],[[920,360],[925,410],[941,430]],
    [[680,440],[690,500]],[[660,420],[660,500]],[[640,400],[650,470]],[[580,545],[640,530]],[[585,540],[600,580]],[[560,410],[575,445]]
  ];

  var MAJOR = [
    ['g',[[45,450],[90,445],[125,436],[153,422],[197,412],[230,392],[263,394],[290,392],[323,387]]],
    ['r',[[323,387],[345,381],[380,370],[420,358],[445,355],[457,355],[473,367],[483,374],[495,366],[505,360]]],
    ['o',[[505,360],[517,360]]],
    ['r',[[517,360],[537,349],[560,350],[590,355]]],
    ['g',[[517,362],[530,375],[537,387]]],
    ['o',[[537,387],[570,392],[600,400]]],
    ['g',[[600,400],[620,407]]],
    ['g',[[517,362],[540,360],[590,365]]],
    ['r',[[590,355],[605,350],[617,334],[630,328],[650,319],[680,295],[693,290],[703,290]]],
    ['x',[[703,290],[730,300]]],
    ['g',[[730,300],[740,302]]],
    ['r',[[740,302],[757,304],[797,325]]],
    ['g',[[797,325],[820,320],[863,335],[890,359],[941,364]]],
    ['o',[[300,331],[330,329]]],
    ['g',[[39,335],[300,331]]],
    ['g',[[330,329],[370,330],[397,314],[430,300]]],
    ['r',[[430,300],[457,290],[470,299],[477,332],[475,352]]],
    ['r',[[473,302],[507,287],[520,295],[553,300],[570,319],[587,355],[592,365],[583,382],[570,409],[563,440],[565,457],[567,477],[573,497]]],
    ['g',[[573,497],[573,530],[572,560],[567,590]]],
    ['r',[[260,477],[277,478]]],
    ['g',[[39,500],[130,490],[180,480],[260,477],[277,478],[327,479],[360,483],[407,488]]],
    ['r',[[407,488],[460,482],[510,478],[543,473],[560,478],[573,488],[600,482],[630,480]]],
    ['r',[[630,480],[657,477],[680,459],[710,454]]],
    ['o',[[710,454],[757,444]]],
    ['g',[[757,444],[807,444],[850,447],[867,455],[890,469],[941,477]]],
    ['g',[[40,533],[87,525],[117,540]]],
    ['o',[[117,540],[127,557],[157,558]]],
    ['g',[[157,558],[187,565],[210,553],[243,540],[280,527]]],
    ['r',[[260,535],[280,527],[323,524],[343,527],[377,533],[400,528]]],
    ['o',[[400,528],[427,522]]],
    ['x',[[427,522],[460,515]]],
    ['r',[[460,515],[487,523],[517,510],[537,515],[553,527],[600,520],[630,517],[650,519]]],
    ['o',[[650,519],[693,524]]],
    ['g',[[693,524],[740,532],[787,544],[837,554],[897,564],[941,572]]],
    ['r',[[783,250],[807,257]]],
    ['g',[[807,257],[863,274],[890,284],[923,295],[937,294]]],
    ['g',[[807,222],[807,259],[795,272],[773,319]]],
    ['r',[[773,319],[768,332],[753,354]]],
    ['g',[[753,354],[748,369],[720,402],[713,435],[712,455]]],
    ['o',[[712,455],[712,489]]],
    ['r',[[712,489],[708,509],[693,532]]],
    ['o',[[693,532],[688,552],[688,589]]],
    ['g',[[807,259],[800,289],[798,325]]],
    ['o',[[798,325],[793,349]]],
    ['g',[[793,349],[783,372],[780,399]]],
    ['o',[[780,399],[777,412],[772,432]]],
    ['g',[[772,432],[777,455],[777,470]]],
    ['o',[[777,470],[773,489],[768,522],[767,552]]],
    ['x',[[767,552],[743,589]]],
    ['g',[[510,440],[512,477]]],
    ['o',[[512,477],[513,490]]],
    ['r',[[513,490],[503,500]]],
    ['g',[[503,500],[503,533]]],
    ['o',[[503,533],[502,543]]],
    ['o',[[502,543],[490,557]]],
    ['g',[[490,557],[480,580],[480,595]]],
    ['r',[[508,385],[507,435],[507,462]]],
    ['g',[[520,369],[512,382],[508,385]]],
    ['g',[[477,355],[463,379],[458,422],[455,462]]],
    ['r',[[463,440],[453,463],[452,507]]],
    ['g',[[452,507],[445,527],[445,580]]],
    ['r',[[445,580],[430,610],[425,653]]],
    ['g',[[425,653],[425,690]]],
    ['o',[[425,690],[426,714]]],
    ['g',[[332,440],[332,477],[327,507],[323,525]]],
    ['r',[[323,525],[327,550],[335,580]]],
    ['g',[[335,580],[335,617]]],
    ['o',[[335,617],[343,637]]],
    ['g',[[343,637],[345,663]]],
    ['o',[[345,663],[367,687]]],
    ['r',[[367,687],[368,714]]],
    ['r',[[313,380],[313,350],[320,335],[330,329]]],
    ['o',[[313,380],[300,410],[285,440],[277,478]]],
    ['g',[[277,478],[280,527]]],
    ['r',[[280,527],[283,563],[288,617],[290,653]]],
    ['o',[[290,653],[295,697]]],
    ['g',[[407,488],[400,510]]],
    ['o',[[400,510],[402,533]]],
    ['o',[[402,533],[405,563]]],
    ['r',[[405,563],[397,580]]],
    ['o',[[397,580],[357,637]]],
    ['r',[[357,637],[347,643],[303,655]]],
    ['g',[[38,640],[130,635],[195,632],[230,637],[260,643],[290,653],[303,655]]],
    ['r',[[395,580],[427,590]]],
    ['g',[[427,590],[437,595]]],
    ['r',[[437,595],[453,603]]],
    ['o',[[453,603],[473,605]]],
    ['g',[[473,605],[490,598]]],
    ['r',[[490,598],[500,608]]],
    ['g',[[288,588],[335,590],[357,582],[395,577]]],
    ['g',[[158,520],[157,563],[163,593],[167,623]]],
    ['o',[[217,520],[210,553]]],
    ['g',[[210,553],[200,603]]],
    ['o',[[200,603],[197,637]]],
    ['g',[[197,637],[197,647],[205,657],[207,687],[200,703]]],
    ['g',[[38,677],[87,690],[120,698],[177,712]]],
    ['g',[[260,710],[380,707],[470,705],[560,702]]],
    ['o',[[177,712],[260,710]]],
    ['g',[[38,315],[47,345],[53,369]]],
    ['o',[[53,369],[48,415],[52,450]]],
    ['g',[[170,372],[167,422]]],
    ['g',[[217,400],[222,460],[217,520]]],
    ['g',[[232,398],[237,382],[240,369]]],
    ['g',[[272,395],[276,440],[277,478]]],
    ['r',[[927,479],[907,512]]],
    ['o',[[907,512],[880,555],[870,582]]],
    ['g',[[893,360],[873,369],[867,392],[870,435],[865,455]]],
    ['g',[[865,455],[843,482],[823,499],[787,542],[757,575],[743,589]]],
    ['g',[[690,222],[720,240]]],
    ['g',[[315,400],[323,470],[327,479]]]
  ];

  // Fine street mesh under the traffic lines.
  var streets = document.getElementById('streets');
  for (var s = 0; s < 760; s++) {
    var x = 45 + rnd() * 890, y = 260 + rnd() * 450;
    if (y < 320 && x < 300) continue;
    var len = 8 + rnd() * 24, horiz = rnd() > .5, tilt = rnd() * 4 - 2;
    var x2 = horiz ? x + len : x + tilt, y2 = horiz ? y + tilt : y + len;
    line(streets, 'M' + x.toFixed(1) + ' ' + y.toFixed(1) + 'L' + x2.toFixed(1) + ' ' + y2.toFixed(1), '#fff', .8 + rnd() * .8);
  }

  // Secondary lanes that fill the blocks of the city.
  function blocked(x, y) {
    if (y < 300 && x < 470) return true;
    if (x > 800 && x < 865 && y > 335 && y < 440) return true;
    if (x > 310 && x < 400 && y > 488 && y < 528) return true;
    if (x > 480 && x < 540 && y > 305 && y < 355) return true;
    return false;
  }
  var FILL = [];
  for (var f = 0; f < 160; f++) {
    var fx = 42 + rnd() * 895, fy = 285 + rnd() * 425;
    if (blocked(fx, fy)) continue;
    var flen = 30 + rnd() * 70, vert = rnd() > .45, slope = (rnd() - .5) * .3;
    var mx = vert ? fx + slope * flen / 2 + (rnd() - .5) * 4 : fx + flen / 2;
    var my = vert ? fy + flen / 2 : fy + slope * flen / 2 + (rnd() - .5) * 4;
    var ex = vert ? fx + slope * flen : fx + flen;
    var ey = vert ? fy + flen : fy + slope * flen;
    if (blocked(ex, ey)) continue;
    FILL.push([[+fx.toFixed(1), +fy.toFixed(1)], [+mx.toFixed(1), +my.toFixed(1)], [+ex.toFixed(1), +ey.toFixed(1)]]);
  }

  var roads = document.getElementById('roads');
  var pal = ['#f2a04a', '#ef4a55', '#f2a04a', '#55c47e'];
  FILL.concat(MINOR).forEach(function (p) {
    var d = smooth(p);
    line(roads, d, '#8be2a8', 2.4);
    var col = pal[Math.floor(rnd() * pal.length)];
    line(roads, d, col, 2.4, (6 + rnd() * 20).toFixed(0) + ' ' + (40 + rnd() * 80).toFixed(0), (rnd() * 90).toFixed(0));
    line(roads, d, '#fff', 1);
  });
  MAJOR.forEach(function (m) { line(roads, smooth(m[1]), C[m[0]], 3.8); });
  MAJOR.forEach(function (m) { line(roads, smooth(m[1]), '#fff', .9); });

  // roundabout
  var ring = document.createElementNS(NS, 'ellipse');
  ring.setAttribute('cx', 295); ring.setAttribute('cy', 707);
  ring.setAttribute('rx', 9); ring.setAttribute('ry', 7);
  ring.setAttribute('fill', '#eef0f0'); ring.setAttribute('stroke', '#2fae62'); ring.setAttribute('stroke-width', 3);
  roads.appendChild(ring);
})();
```
